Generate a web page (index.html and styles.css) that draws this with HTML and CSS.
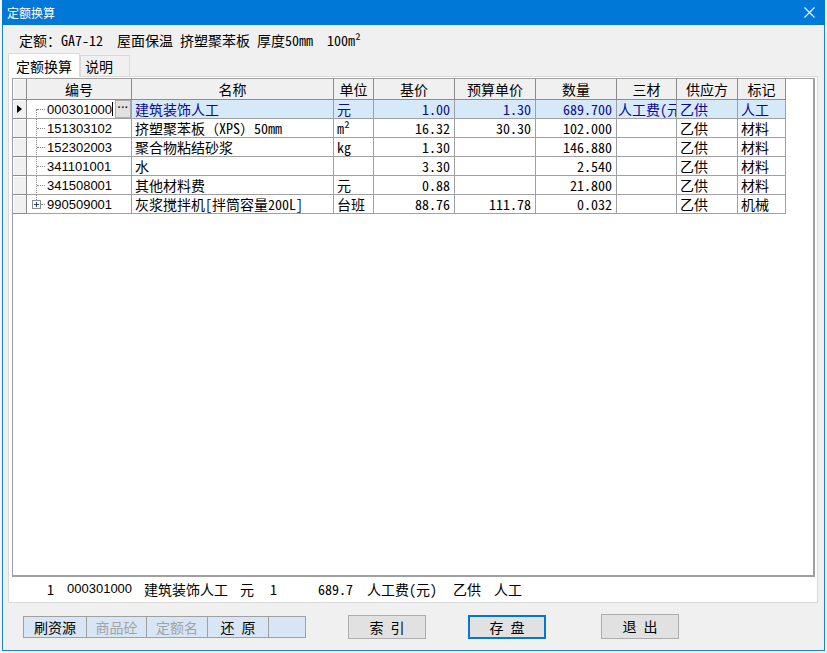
FILE: index.html
```html
<!DOCTYPE html>
<html lang="zh-CN">
<head>
<meta charset="utf-8">
<title>定额换算</title>
<link rel="stylesheet" href="styles.css">
</head>
<body>
<div class="desk">
  <div class="win">
    <div class="titlebar">
      <span class="title">定额换算</span>
      <svg class="close" width="11" height="11" viewBox="0 0 11 11"><path d="M0.5 0.5L10.5 10.5M10.5 0.5L0.5 10.5" stroke="#fff" stroke-width="1.1" fill="none"/></svg>
    </div>
    <div class="client">
      <div class="info">定额：GA7-12  屋面保温 挤塑聚苯板 厚度50mm  100m²</div>
      <div class="tabs">
        <div class="tab active">定额换算</div>
        <div class="tab">说明</div>
      </div>
      <div class="page">
        <div class="grid">
          <div class="table">
            <div class="h ind"></div>
            <div class="h">编号</div>
            <div class="h">名称</div>
            <div class="h">单位</div>
            <div class="h">基价</div>
            <div class="h">预算单价</div>
            <div class="h">数量</div>
            <div class="h">三材</div>
            <div class="h">供应方</div>
            <div class="h">标记</div>

            <div class="c ind"><span class="arrow"></span></div>
            <div class="c code first edit">000301000<span class="caret"></span><span class="dots">···</span></div>
            <div class="c sel">建筑装饰人工</div>
            <div class="c sel">元</div>
            <div class="c sel num">1.00</div>
            <div class="c sel num">1.30</div>
            <div class="c sel num">689.700</div>
            <div class="c sel clip">人工费(元)</div>
            <div class="c sel">乙供</div>
            <div class="c sel">人工</div>

            <div class="c ind"></div>
            <div class="c code">151303102</div>
            <div class="c">挤塑聚苯板（XPS）50mm</div>
            <div class="c">m²</div>
            <div class="c num">16.32</div>
            <div class="c num">30.30</div>
            <div class="c num">102.000</div>
            <div class="c"></div>
            <div class="c">乙供</div>
            <div class="c">材料</div>

            <div class="c ind"></div>
            <div class="c code">152302003</div>
            <div class="c">聚合物粘结砂浆</div>
            <div class="c">kg</div>
            <div class="c num">1.30</div>
            <div class="c num"></div>
            <div class="c num">146.880</div>
            <div class="c"></div>
            <div class="c">乙供</div>
            <div class="c">材料</div>

            <div class="c ind"></div>
            <div class="c code">341101001</div>
            <div class="c">水</div>
            <div class="c"></div>
            <div class="c num">3.30</div>
            <div class="c num"></div>
            <div class="c num">2.540</div>
            <div class="c"></div>
            <div class="c">乙供</div>
            <div class="c">材料</div>

            <div class="c ind"></div>
            <div class="c code">341508001</div>
            <div class="c">其他材料费</div>
            <div class="c">元</div>
            <div class="c num">0.88</div>
            <div class="c num"></div>
            <div class="c num">21.800</div>
            <div class="c"></div>
            <div class="c">乙供</div>
            <div class="c">材料</div>

            <div class="c ind"></div>
            <div class="c code last"><svg class="plus" width="9" height="9" viewBox="0 0 9 9"><rect x="0.5" y="0.5" width="8" height="8" fill="#fff" stroke="#8c8c8c"/><path d="M2 4.5H7M4.5 2V7" stroke="#1f3f8f" stroke-width="1"/></svg>990509001</div>
            <div class="c">灰浆搅拌机[拌筒容量200L]</div>
            <div class="c">台班</div>
            <div class="c num">88.76</div>
            <div class="c num">111.78</div>
            <div class="c num">0.032</div>
            <div class="c"></div>
            <div class="c">乙供</div>
            <div class="c">机械</div>
          </div>
        </div>
        <div class="status">
          <span>1</span>
          <span class="sans">000301000</span>
          <span>建筑装饰人工</span>
          <span>元</span>
          <span>1</span>
          <span>689.7</span>
          <span>人工费(元)</span>
          <span>乙供</span>
          <span>人工</span>
        </div>
      </div>
      <div class="buttons">
        <div class="tool">
          <span class="ti">刷资源</span>
          <span class="ti dim">商品砼</span>
          <span class="ti dim">定额名</span>
          <span class="ti">还 原</span>
          <span class="ti last"></span>
        </div>
        <div class="btn b1">索 引</div>
        <div class="btn b2 def">存 盘</div>
        <div class="btn b3">退 出</div>
      </div>
    </div>
  </div>
</div>
</body>
</html>
```

FILE: styles.css
```css
* { box-sizing: border-box; }
html, body {
  margin: 0;
  padding: 0;
}
body {
  width: 827px;
  height: 653px;
  overflow: hidden;
  background: #f4f4f4;
  font-family: "Noto Sans Mono CJK SC", "Noto Sans CJK SC", monospace;
  font-size: 14px;
  color: #000;
}
.desk {
  padding-left: 2px;
}
.win {
  width: 823px;
  height: 651px;
  border: 1px solid #1b80d6;
  border-top: 0;
  background: #f0f0f0;
  display: flex;
  flex-direction: column;
}
.titlebar {
  height: 25px;
  flex: none;
  background: #0078d7;
  color: #fff;
  display: flex;
  align-items: center;
  justify-content: space-between;
  margin: 0 -1px;
  padding: 0 10px 0 5px;
}
.title {
  font-family: "Noto Sans CJK SC", sans-serif;
  font-size: 12px;
  line-height: 14px;
}
.close { display: block; }
.client {
  flex: 1;
  display: flex;
  flex-direction: column;
}
.info {
  height: 28px;
  line-height: 30px;
  padding-left: 16px;
  white-space: pre;
}
.tabs {
  display: flex;
  align-items: flex-end;
  height: 23px;
  margin-left: 5px;
  position: relative;
  z-index: 1;
}
.tab {
  height: 21px;
  line-height: 20px;
  border: 1px solid #d9d9d9;
  border-bottom: 0;
  background: #f0f0f0;
  padding: 0 0 0 4px;
  width: 50px;
}
.tab.active {
  height: 24px;
  margin-bottom: -1px;
  background: #fff;
  width: 72px;
  padding-left: 7px;
  line-height: 24px;
}
.page {
  margin-left: 5px;
  width: 810px;
  height: 527px;
  flex: none;
  border: 1px solid #d9d9d9;
  background: #fff;
  padding: 1px 2px 0 3px;
  display: flex;
  flex-direction: column;
}
.grid {
  height: 499px;
  flex: none;
  border-style: solid;
  border-color: #a0a0a0;
  border-width: 1px 2px 2px 1px;
  background: #fff;
}
.table {
  display: grid;
  grid-template-columns: 14px 105px 202px 40px 81px 81px 81px 60px 61px 48px;
  grid-auto-rows: 19px;
  grid-template-rows: 21px;
  width: 773px;
}
.h, .c {
  border-right: 1px solid #a0a0a0;
  border-bottom: 1px solid #a0a0a0;
  white-space: nowrap;
  overflow: hidden;
  line-height: 18px;
}
.h {
  background: #f0f0f0;
  border-color: #8c8c8c;
  text-align: center;
  line-height: 20px;
}
.c {
  padding-left: 3px;
  padding-right: 4px;
}
.c.clip {
  padding-left: 1px;
  padding-right: 0;
  text-overflow: clip;
}
.c.ind, .h.ind {
  background: #f0f0f0;
  padding: 0;
  border-color: #8c8c8c;
  box-shadow: inset 1px 1px 0 #fff;
}
.arrow {
  display: block;
  width: 0;
  height: 0;
  margin: 5px 0 0 4px;
  border-left: 5px solid #000;
  border-top: 4px solid transparent;
  border-bottom: 4px solid transparent;
}
.num { text-align: right; }
.sel {
  background: #d5e9f9;
  color: #0a0a96;
}
.code {
  position: relative;
  padding-left: 20px;
  font-family: "Liberation Sans", sans-serif;
  font-size: 13px;
  line-height: 19px;
}
.code::before {
  content: "";
  position: absolute;
  left: 9px;
  top: -1px;
  bottom: -1px;
  border-left: 1px dotted #8a8a8a;
}
.code::after {
  content: "";
  position: absolute;
  left: 10px;
  top: 9px;
  width: 8px;
  border-top: 1px dotted #8a8a8a;
}
.code.first::before { top: 9px; }
.code.last::before { bottom: 13px; }
.code.last::after { left: 14px; width: 4px; }
.plus {
  position: absolute;
  left: 5px;
  top: 5px;
  display: block;
}
.caret {
  display: inline-block;
  width: 1px;
  height: 14px;
  background: #000;
  vertical-align: -2px;
  margin-left: 0;
}
.dots {
  position: absolute;
  right: 0;
  top: 0;
  width: 16px;
  height: 18px;
  background: #e1e1e1;
  border: 1px solid #adadad;
  font-family: "Liberation Sans", sans-serif;
  font-size: 11px;
  line-height: 13px;
  text-align: center;
  color: #222;
  font-weight: bold;
}
.status {
  height: 25px;
  flex: none;
  display: grid;
  grid-template-columns: 20px 77px 96px 30px 48px 49px 86px 41px auto;
  padding-left: 35px;
  line-height: 24px;
  white-space: nowrap;
}
.sans {
  font-family: "Liberation Sans", sans-serif;
  font-size: 13px;
}
.buttons {
  display: flex;
  align-items: flex-start;
  padding: 12px 0 0 20px;
}
.tool {
  display: flex;
  margin-top: 1px;
  height: 22px;
  border: 1px solid #a0a0a0;
  background: #d7e5f4;
}
.ti {
  width: 63px;
  border-right: 1px solid #a0a0a0;
  text-align: center;
  line-height: 20px;
}
.ti:nth-child(2) { width: 60px; }
.ti:nth-child(3), .ti:nth-child(4) { width: 61px; }
.ti.last { width: 36px; border-right: 0; }
.ti.dim { color: #a3a3a3; }
.btn {
  width: 78px;
  height: 24px;
  background: #e1e1e1;
  border: 1px solid #adadad;
  text-align: center;
  line-height: 22px;
}
.b1 { margin-left: 42px; }
.b2 { margin-left: 42px; }
.b3 { margin-left: 55px; margin-top: -1px; height: 25px; }
.def {
  border: 2px solid #0078d7;
  line-height: 20px;
}
```
